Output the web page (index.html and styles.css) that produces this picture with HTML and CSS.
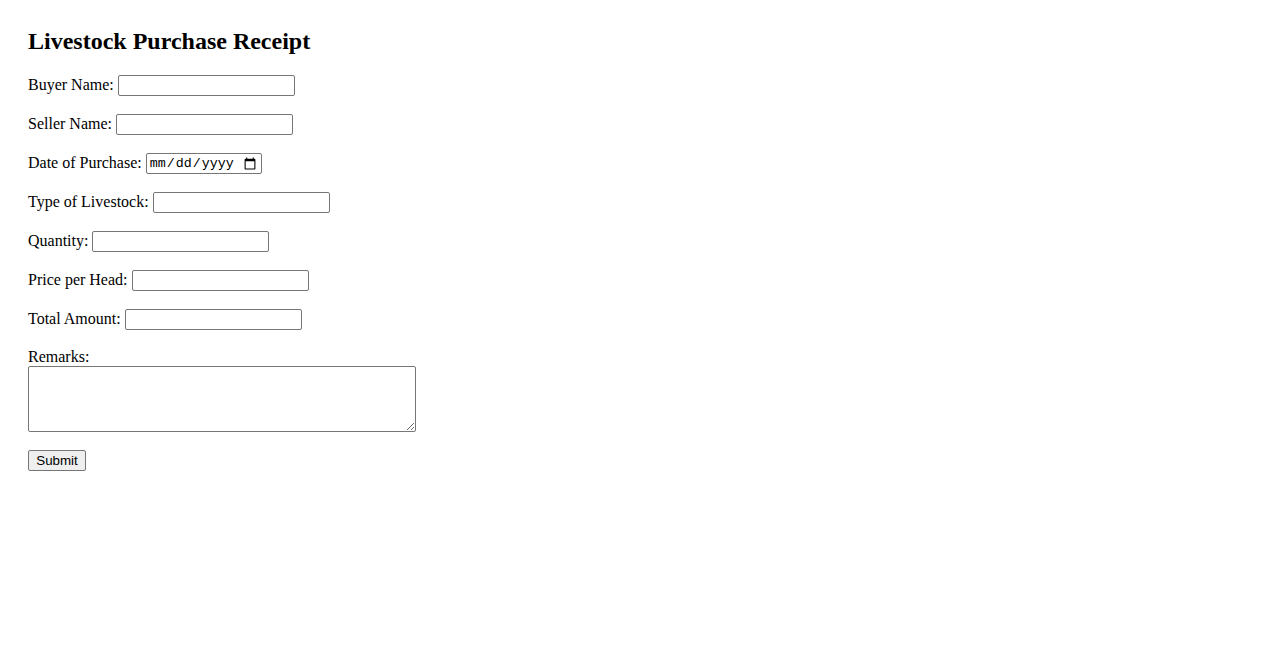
FILE: index.html
```html
<!DOCTYPE html>
<html lang="en">
<head>
<meta charset="utf-8">
<title>Livestock Purchase Receipt</title>
<link rel="stylesheet" href="styles.css">
</head>
<body>
<div class="page">
  <h2 class="title">Livestock Purchase Receipt</h2>
  <form class="form">
    <div class="row"><label for="buyer">Buyer Name:</label><input class="field" type="text" id="buyer"></div>
    <div class="row"><label for="seller">Seller Name:</label><input class="field" type="text" id="seller"></div>
    <div class="row"><label for="date">Date of Purchase:</label><input class="field date" type="date" id="date"></div>
    <div class="row"><label for="type">Type of Livestock:</label><input class="field" type="text" id="type"></div>
    <div class="row"><label for="qty">Quantity:</label><input class="field" type="text" id="qty"></div>
    <div class="row"><label for="price">Price per Head:</label><input class="field" type="text" id="price"></div>
    <div class="row"><label for="total">Total Amount:</label><input class="field" type="text" id="total"></div>
    <div class="block">
      <label class="block-label" for="remarks">Remarks:</label>
      <textarea class="remarks" id="remarks"></textarea>
    </div>
    <button class="submit" type="submit">Submit</button>
  </form>
</div>
</body>
</html>
```
FILE: styles.css
```css
html, body {
  margin: 0;
  padding: 0;
  background: #ffffff;
}
.page {
  padding: 27px 28px 28px 28px;
  font-family: "Liberation Serif", "Times New Roman", serif;
  font-size: 16px;
  color: #000;
}
.title {
  margin: 0 0 20px 0;
  font-size: 24px;
  line-height: 28px;
  font-weight: bold;
}
.form {
  margin: 0;
}
.row {
  display: flex;
  align-items: center;
  gap: 4px;
  height: 21px;
  margin-bottom: 18px;
}
.row label {
  line-height: 18px;
  padding-bottom: 2px;
}
.field {
  box-sizing: border-box;
  width: 177px;
  height: 21px;
  margin: 0;
  padding: 1px 2px;
  border: 1px solid #767676;
  border-radius: 2px;
  font-family: "Liberation Sans", Arial, sans-serif;
  font-size: 13.33px;
  background: #fff;
}
.field.date {
  width: 116px;
  font-family: "Liberation Mono", "Courier New", monospace;
  font-size: 13.33px;
  padding: 1px 2px;
}
.block {
  margin-bottom: 18px;
}
.block-label {
  display: block;
  line-height: 18px;
}
.remarks {
  display: block;
  box-sizing: border-box;
  width: 388px;
  height: 66px;
  margin: 0;
  padding: 2px;
  border: 1px solid #767676;
  border-radius: 2px;
  font-family: "Liberation Mono", monospace;
  font-size: 13.33px;
}
.submit {
  display: block;
  box-sizing: border-box;
  width: 58px;
  height: 21px;
  margin: 0;
  padding: 1px 6px;
  border: 1px solid #767676;
  border-radius: 2px;
  background: #efefef;
  font-family: "Liberation Sans", Arial, sans-serif;
  font-size: 13.33px;
  color: #000;
}
```
